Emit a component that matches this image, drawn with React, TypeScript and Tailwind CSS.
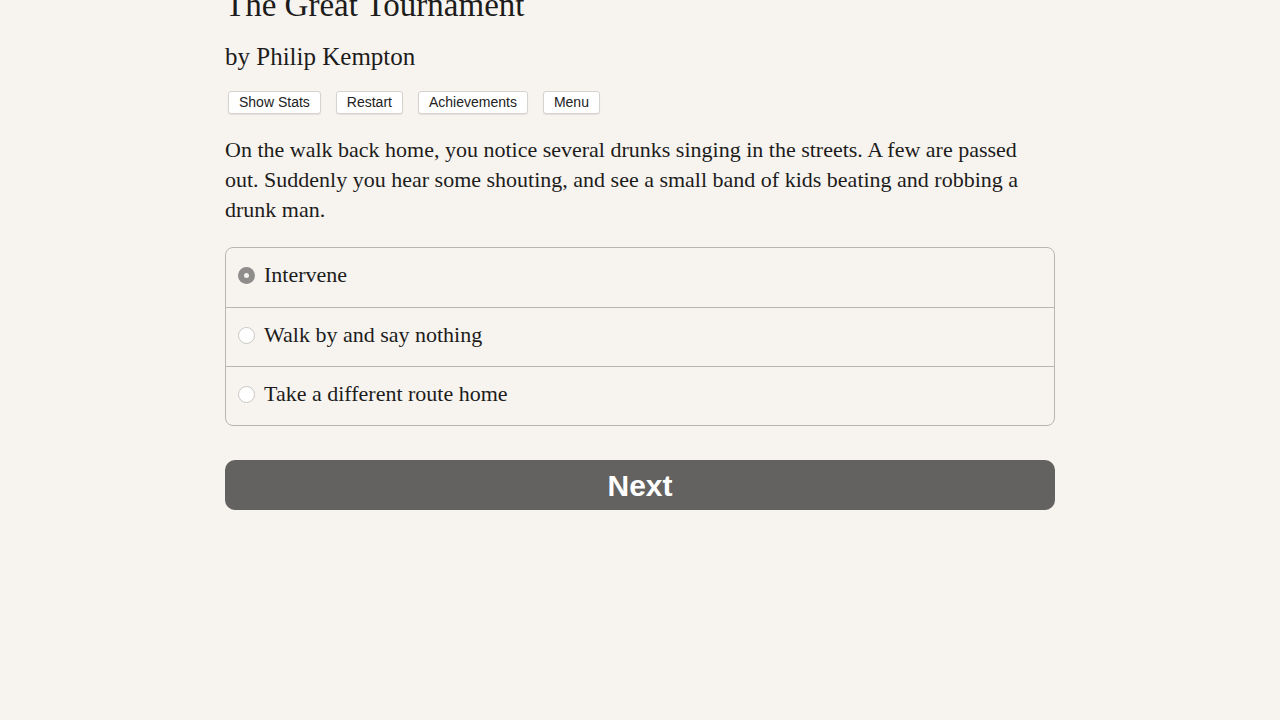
import { useState } from 'react';

const serif = { fontFamily: '"Liberation Serif", "Times New Roman", serif' };
const sans = { fontFamily: '"Liberation Sans", Arial, sans-serif' };

const choices = ['Intervene', 'Walk by and say nothing', 'Take a different route home'];

function Radio({ checked }: { checked: boolean }) {
  return checked ? (
    <span className="flex h-[17px] w-[17px] shrink-0 items-center justify-center rounded-full bg-[#8f8d8b]">
      <span className="h-[5px] w-[5px] rounded-full bg-[#f3f1ee]" />
    </span>
  ) : (
    <span className="h-[17px] w-[17px] shrink-0 rounded-full border border-[#c9c7c4] bg-white" />
  );
}

export default function App() {
  const [selected, setSelected] = useState(0);

  return (
    <div className="min-h-screen w-full overflow-hidden bg-[#f7f4f0] text-[#1d1c1b]" style={serif}>
      <div className="mx-auto -mt-[15px] w-[830px]">
        {/* Title */}
        <h1 className="text-[33px] leading-[40px]">The Great Tournament</h1>
        <h2 className="mt-[16px] text-[25px] leading-[32px]">by Philip Kempton</h2>

        {/* Toolbar */}
        <div className="mt-[18px] flex gap-[15px] pl-[3px]" style={sans}>
          {['Show Stats', 'Restart', 'Achievements', 'Menu'].map((label) => (
            <button
              key={label}
              className="h-[23px] rounded-[3px] border border-[#d6d3cf] bg-white px-[10px] text-[14px] leading-[21px] text-[#222] shadow-[0_1px_1px_rgba(0,0,0,0.08)]"
            >
              {label}
            </button>
          ))}
        </div>

        {/* Passage */}
        <p className="mt-[21px] pr-[20px] text-[22px] leading-[30px]">
          On the walk back home, you notice several drunks singing in the streets. A few are passed
          out. Suddenly you hear some shouting, and see a small band of kids beating and robbing a
          drunk man.
        </p>

        {/* Choices */}
        <div className="mt-[22px] overflow-hidden rounded-[8px] border border-[#b9b6b2]">
          {choices.map((choice, i) => (
            <label
              key={choice}
              onClick={() => setSelected(i)}
              className={`flex h-[59px] cursor-pointer items-center gap-[10px] pb-[4px] pl-[12px] text-[22px] ${
                i > 0 ? 'border-t border-[#b9b6b2]' : ''
              }`}
            >
              <Radio checked={selected === i} />
              <span className="-ml-[1px] -mt-[2px]">{choice}</span>
            </label>
          ))}
        </div>

        {/* Next */}
        <button
          className="mt-[34px] flex h-[50px] w-full items-center justify-center rounded-[10px] bg-[#636260] text-[30px] font-bold text-white"
          style={sans}
        >
          Next
        </button>
      </div>
    </div>
  );
}
